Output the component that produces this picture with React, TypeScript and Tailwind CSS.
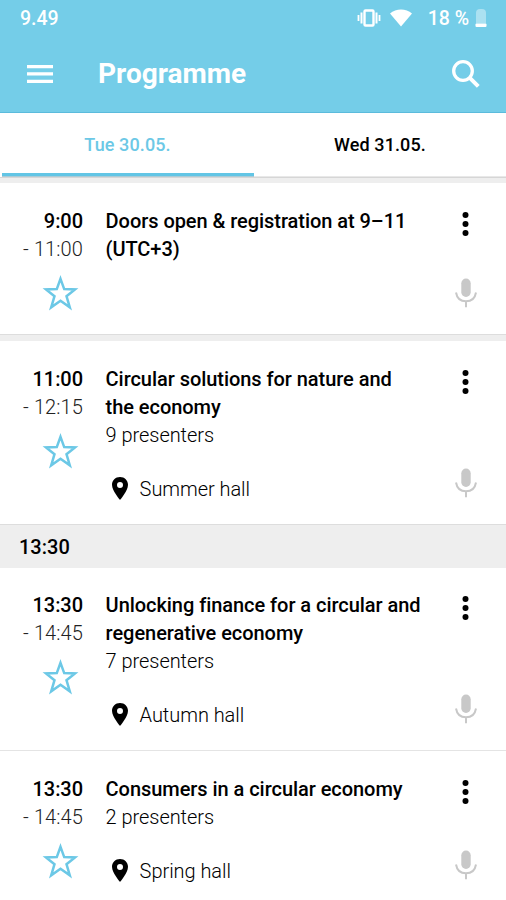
type Session = {
  start: string;
  end: string;
  title: string[];
  presenters?: string;
  hall?: string;
};

const morning: Session[] = [
  { start: "9:00", end: "11:00", title: ["Doors open & registration at 9–11", "(UTC+3)"] },
  {
    start: "11:00",
    end: "12:15",
    title: ["Circular solutions for nature and", "the economy"],
    presenters: "9 presenters",
    hall: "Summer hall",
  },
];

const afternoon: Session[] = [
  {
    start: "13:30",
    end: "14:45",
    title: ["Unlocking finance for a circular and", "regenerative economy"],
    presenters: "7 presenters",
    hall: "Autumn hall",
  },
  {
    start: "13:30",
    end: "14:45",
    title: ["Consumers in a circular economy"],
    presenters: "2 presenters",
    hall: "Spring hall",
  },
];

function StarIcon() {
  return (
    <svg className="mt-3 mr-[3px] h-9 w-[38px]" viewBox="0 0 38 36" fill="none" stroke="#6cc8e6" strokeWidth="2.5">
      <path d="M18.5 3.8 L22.2 14.1 L33 14.4 L24.5 21.2 L27.8 32.3 L18.5 25.8 L9.2 32.3 L12.5 21.2 L4 14.4 L14.8 14.1 Z" />
    </svg>
  );
}

function MicIcon() {
  return (
    <svg className="h-[30px] w-[22px]" viewBox="0 0 22 30" fill="none">
      <rect x="6.3" y="0.5" width="9.4" height="18.5" rx="4.7" fill="#c8c8c8" />
      <path d="M1 14.5 C2 20.5 6 23.3 11 23.3 C16 23.3 20 20.5 21 14.5 M11 23.3 V29.3" stroke="#c8c8c8" strokeWidth="2" />
    </svg>
  );
}

function DotsIcon() {
  return (
    <svg className="h-6 w-[7px]" viewBox="0 0 7 24" fill="#000">
      <circle cx="3.5" cy="3" r="3" />
      <circle cx="3.5" cy="12" r="3" />
      <circle cx="3.5" cy="21" r="3" />
    </svg>
  );
}

function PinIcon() {
  return (
    <svg className="h-[23px] w-4" viewBox="0 0 16 23" fill="#000">
      <path fillRule="evenodd" d="M8 0 C3.4 0 0 3.4 0 7.8 C0 13.8 8 23 8 23 S16 13.8 16 7.8 C16 3.4 12.6 0 8 0 Z M8 5 a3 3 0 1 1 0 6 a3 3 0 0 1 0 -6 Z" />
    </svg>
  );
}

function SessionRow({ session, className }: { session: Session; className: string }) {
  return (
    <article className={`flex text-xl leading-7 tracking-[-0.05px] text-black ${className}`}>
      <div className="flex w-[83px] shrink-0 flex-col items-end pt-6">
        <span className="font-medium">{session.start}</span>
        <span className="font-light tracking-[0.1px] text-[#222]">- {session.end}</span>
        <StarIcon />
      </div>
      <div className="flex-1 whitespace-nowrap pt-6 pl-[22.6px]">
        <h2 className="font-medium">
          {session.title.map((line) => (
            <span key={line} className="block">{line}</span>
          ))}
        </h2>
        {session.presenters && <p className="font-light">{session.presenters}</p>}
        {session.hall && (
          <div className="mt-[26px] flex items-center gap-3 pl-[6px]">
            <div className="-mt-[2px]">
              <PinIcon />
            </div>
            <span className="font-light">{session.hall}</span>
          </div>
        )}
      </div>
      <div className="flex w-[81px] shrink-0 flex-col items-center justify-between pt-[29px] pb-[26px]">
        <DotsIcon />
        <MicIcon />
      </div>
    </article>
  );
}

export default function App() {
  return (
    <main className="h-[900px] w-[506px] overflow-hidden bg-white font-['Roboto',sans-serif]">
      <header className="flex h-[113px] flex-col border-b border-[#5bbbdc] bg-[#74cde8] text-white">
        <div className="flex h-9 items-center justify-between pr-[19px] pl-5 text-[19.5px] font-medium">
          <span className="pt-0.5">9.49</span>
          <div className="flex items-center">
            <svg className="h-[18px] w-6" viewBox="0 0 24 18" fill="none" stroke="#fff">
              <rect x="7.5" y="1.5" width="9" height="15" rx="1" strokeWidth="2.4" />
              <path d="M4.5 3.5 V14.5 M19.5 3.5 V14.5" strokeWidth="2" />
              <path d="M1.5 6 V12 M22.5 6 V12" strokeWidth="1.8" />
            </svg>
            <svg className="ml-[9px] h-[18px] w-[22px]" viewBox="0 0 22 18" fill="#fff">
              <path d="M0 4.5 C6 -0.7 16 -0.7 22 4.5 L11 17.5 Z" />
            </svg>
            <span className="ml-4 pt-0.5">18 %</span>
            <svg className="ml-[6px] h-[19px] w-3" viewBox="0 0 12 19" fill="#fff">
              <path d="M1 14.5 V4 Q1 0 5 0 H7 Q11 0 11 4 V14.5 Z" opacity="0.4" />
              <rect x="0.5" y="14.5" width="11" height="3.5" rx="1" />
            </svg>
          </div>
        </div>
        <div className="flex h-[76px] items-center pr-[26px] pl-[27px]">
          <svg className="h-[18px] w-[26px]" viewBox="0 0 26 18" fill="#fff">
            <path d="M0 0h26v3.3H0zM0 7.3h26v3.3H0zM0 14.7h26V18H0z" />
          </svg>
          <h1 className="ml-[45px] flex-1 text-[28px] font-bold">Programme</h1>
          <svg className="h-7 w-7" viewBox="0 0 28 28" fill="none" stroke="#fff">
            <circle cx="11" cy="11" r="9.3" strokeWidth="3.3" />
            <path d="M17.3 17.3 L26.3 26.3" strokeWidth="4" />
          </svg>
        </div>
      </header>

      <nav className="flex h-16 text-center text-lg leading-[63px] font-medium tracking-[0.1px]">
        <button className="ml-0.5 flex h-16 w-[252px] flex-col border-b border-[#a9cbd7] text-[#6cc8e6]">
          <span className="block h-[63px] w-full border-b-[3px] border-[#62c5e5] pr-px">Tue 30.05.</span>
        </button>
        <button className="flex h-16 flex-1 flex-col border-b border-[#e8e8e8] text-black">
          <span className="block h-[63px] w-full">Wed 31.05.</span>
        </button>
      </nav>
      <div className="h-1.5 border-t border-[#d6d6d6] bg-[#eee]" />

      <SessionRow session={morning[0]} className="h-[151px]" />
      <div className="h-[7px] border-t border-[#ddd] bg-[#eee]" />
      <SessionRow session={morning[1]} className="h-[183px]" />
      <div className="flex h-11 items-center border-t border-[#ddd] bg-[#eee] pt-px pl-[19px] text-xl font-medium">
        13:30
      </div>
      <SessionRow session={afternoon[0]} className="-mt-px h-[183px]" />
      <SessionRow session={afternoon[1]} className="h-[156px] border-t border-[#e4e4e4]" />
    </main>
  );
}
